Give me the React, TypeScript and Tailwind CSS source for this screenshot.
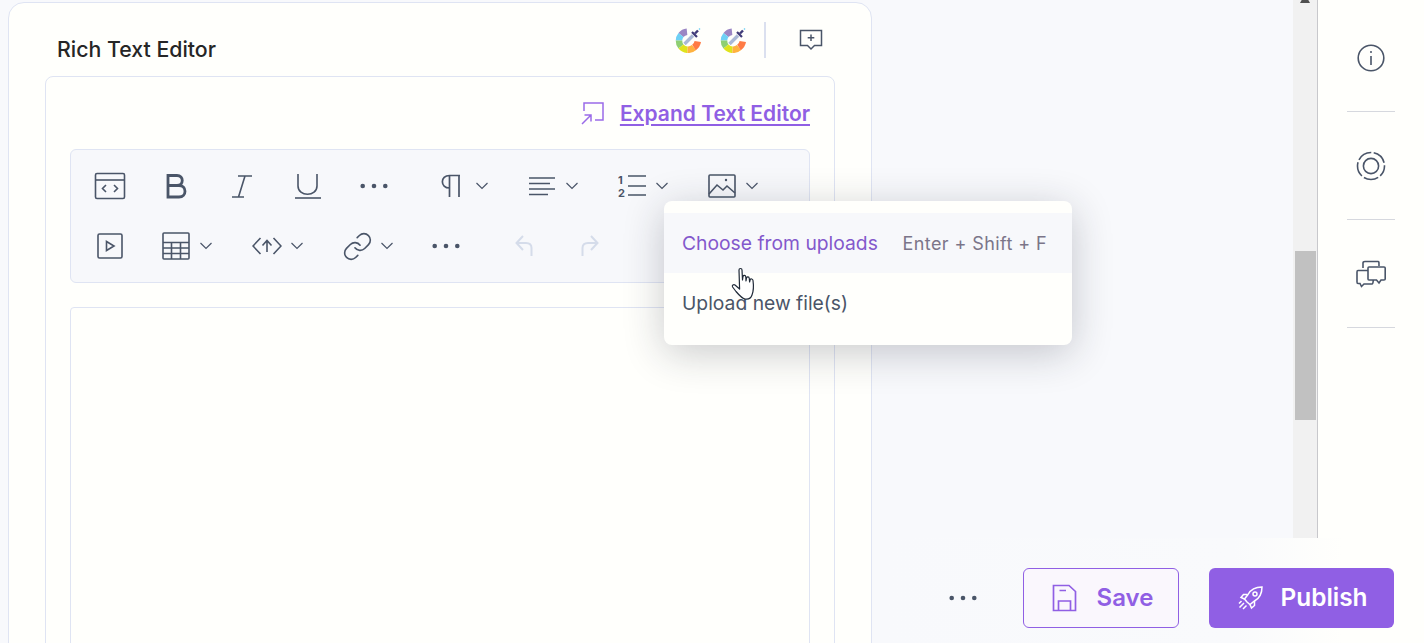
import { Link } from "lucide-react";
import type { ReactNode } from "react";

const ink = "#4a5568";

function Chevron() {
  return (
    <svg width="12" height="8" viewBox="0 0 12 8" fill="none" stroke={ink} strokeWidth="1.2">
      <path d="M0.5 1 L6 6.5 L11.5 1" />
    </svg>
  );
}

function Dots() {
  return (
    <svg width="28" height="6" viewBox="0 0 28 6" fill={ink}>
      <circle cx="2.7" cy="3" r="2.3" />
      <circle cx="14" cy="3" r="2.3" />
      <circle cx="25.3" cy="3" r="2.3" />
    </svg>
  );
}

function Cell({ children, wide, gap = "gap-[10px]", className = "" }: { children: ReactNode; wide?: boolean; gap?: string; className?: string }) {
  return (
    <button className={`flex h-[60px] items-center justify-center ${gap} ${wide ? "w-[90px]" : "w-[66px]"} ${className}`}>
      {children}
      {wide && <Chevron />}
    </button>
  );
}

function Stroke({ w, h, children, sw = 1.6, color = ink }: { w: number; h: number; children: ReactNode; sw?: number; color?: string }) {
  return (
    <svg width={w} height={h} viewBox={`0 0 ${w} ${h}`} fill="none" stroke={color} strokeWidth={sw} className="shrink-0">
      {children}
    </svg>
  );
}

function ColorWheel() {
  return (
    <svg width="26" height="26" viewBox="0 0 26 26" fill="none" className="shrink-0">
      <g strokeWidth="6.5">
        <path d="M12 4.800 A9 9 0 0 0 6 8" stroke="#9b86c4" />
        <path d="M6 8 A9 9 0 0 0 4 13.500" stroke="#6ed0f5" />
        <path d="M4 13.500 A9 9 0 0 0 6 19.500" stroke="#8fcf72" />
        <path d="M6 19.500 A9 9 0 0 0 12.500 22.800" stroke="#dfe31c" />
        <path d="M12.500 22.800 A9 9 0 0 0 19 20.500" stroke="#ffb23f" />
        <path d="M19 20.500 A9 9 0 0 0 22.800 14.500" stroke="#ff7b45" />
      </g>
      <path d="M9.500 17 L18 8.500" stroke="#aab8d6" strokeWidth="3.400" />
      <path d="M17 5 L22 10" stroke="#3f3a78" strokeWidth="2.200" />
      <path d="M20 6.500 L23 3.500" stroke="#3f3a78" strokeWidth="2.400" />
      <path d="M24 2.500 L25 1.500" stroke="#6ed0f5" strokeWidth="1.400" />
    </svg>
  );
}

function HandCursor() {
  return (
    <svg width="26" height="34" viewBox="0 0 26 34" className="absolute left-[731px] top-[267px]" fill="#fff" stroke="#1f2937" strokeWidth="1.2" strokeLinejoin="round">
      <path d="M8 3 C8 1 11 1 11 3 L11.5 13 L12 9.5 C12.5 8 14.5 8 14.8 10 L15 14 L15.5 11 C16 9.5 18 9.5 18.3 11.5 L18.6 15 L19.2 12.5 C19.8 11.5 21.8 11.8 22 13.5 C22.6 18 22.6 24 21 28 C20 31 17 32.5 14 32 C11 31.5 8 28 5 24.5 L1.6 20 C0.6 18.5 2.6 17 4 18 L8.6 22 Z" />
    </svg>
  );
}

export default function App() {
  return (
    <div className="relative flex h-[643px] w-full overflow-hidden bg-[#f8f9fc] font-['Inter',sans-serif]">
      <main className="flex-1 pl-2 pt-[2px]">
        <section className="h-[700px] w-[864px] rounded-t-[16px] border border-[#dfe4f3] bg-[#fffffc] px-9">
          <header className="flex h-[73px] items-center justify-between pr-[12px] pl-3">
            <h2 className="mt-[18px] text-[21.3px] font-medium leading-6 text-[#262626]">Rich Text Editor</h2>
            <div className="mb-[-1px] flex items-center">
              <ColorWheel />
              <span className="w-[19px]" />
              <ColorWheel />
              <span className="ml-[18px] h-9 w-[2px] bg-[#dbe0ef]" />
              <span className="ml-[33px]">
                <Stroke w={24} h={22} sw={1.5}>
                  <path d="M1.5 1.5 H22.5 V16.5 H15.5 L12 20 L8.5 16.5 H1.5 Z" />
                  <path d="M12 5.5 V12 M8.7 8.8 H15.3" />
                </Stroke>
              </span>
            </div>
          </header>

          <div className="h-[600px] rounded-t-[8px] border border-[#dfe4f3] px-6 pt-6">
            <div className="mb-6 flex h-6 items-center justify-end gap-[16px]">
              <Stroke w={23} h={23} sw={1.5} color="#9a6be8">
                <path d="M3 9 V1 H22 V18 H14" />
                <path d="M1 22 L10 13 M3.5 13 H10 V19.5" />
              </Stroke>
              <a className="pt-[1px] text-[21px] font-semibold leading-6 text-[#905fe4] underline decoration-2 underline-offset-[3px]">Expand Text Editor</a>
            </div>

            <div className="rounded-[6px] border border-[#dfe4f3] bg-[#f7f8fb] px-[6px] py-[6px]">
              <div className="flex">
                <Cell>
                  <Stroke w={32} h={28}>
                    <rect x="1.5" y="1.5" width="29" height="25" rx="1.5" />
                    <path d="M1.5 8 H30.5" />
                    <path d="M12 13 L8.5 16.5 L12 20 M20 13 L23.5 16.5 L20 20" />
                  </Stroke>
                </Cell>
                <Cell>
                  <Stroke w={22} h={26} sw={2.8}>
                    <path d="M3 2.5 H12 C19 2.5 19 12.5 12 12.5 H3 Z M3 12.5 H14 C22 12.5 22 24 14 24 H3 Z" />
                  </Stroke>
                </Cell>
                <Cell>
                  <Stroke w={22} h={24}>
                    <path d="M7 2 H21 M1 23 H13 M14 2 L7.5 23" />
                  </Stroke>
                </Cell>
                <Cell>
                  <Stroke w={28} h={26}>
                    <path d="M4 1 V13 C4 24 23 24 23 13 V1" />
                    <path d="M1 25 H27" />
                  </Stroke>
                </Cell>
                <Cell>
                  <Dots />
                </Cell>
                <span className="w-[11px]" />
                <Cell wide gap="gap-[15px]">
                  <Stroke w={22} h={24} sw={1.7}>
                    <path d="M10.500 1.500 C1 1.500 1 14 10.500 14 M10.500 1 V23 M20 1 V23 M10.500 1.500 H21" />
                  </Stroke>
                </Cell>
                <Cell wide>
                  <Stroke w={28} h={20}>
                    <path d="M1 2 H27 M1 7.5 H22 M1 13 H27 M1 18.5 H20" />
                  </Stroke>
                </Cell>
                <Cell wide>
                  <svg width="28" height="28" viewBox="0 0 28 28" fill="none" stroke={ink} strokeWidth="1.6" className="shrink-0">
                    <text x="0" y="12" fontSize="11" fontWeight="700" fill={ink} stroke="none" fontFamily="Inter">1</text>
                    <text x="0" y="25" fontSize="11" fontWeight="700" fill={ink} stroke="none" fontFamily="Inter">2</text>
                    <path d="M10 4 H28 M10 14 H28 M10 23 H28" />
                  </svg>
                </Cell>
                <Cell wide>
                  <Stroke w={28} h={24}>
                    <rect x="1" y="1" width="26" height="22" rx="1" />
                    <path d="M1 20 L9 11 L15 16 L19 12 L27 19" />
                    <circle cx="18" cy="6" r="1.2" fill={ink} stroke="none" />
                  </Stroke>
                </Cell>
              </div>
              <div className="flex">
                <Cell>
                  <Stroke w={26} h={26}>
                    <rect x="1" y="1" width="24" height="24" rx="1.5" />
                    <path d="M9.5 8.5 L17 13 L9.5 17.5 Z" />
                  </Stroke>
                </Cell>
                <Cell wide className="pr-[2px]">
                  <Stroke w={28} h={28}>
                    <rect x="1" y="1" width="26" height="26" rx="1" />
                    <path d="M1 10.5 H27 M1 16 H27 M1 21.5 H27 M9.5 10.5 V27 M18.5 10.5 V27" />
                  </Stroke>
                </Cell>
                <Cell wide gap="gap-[9px]" className="pr-[2px]">
                  <Stroke w={30} h={20}>
                    <path d="M8.500 2 L1 10 L8.500 18 M21.500 2 L29 10 L21.500 18" />
                    <path d="M15 16 V5 M10.5 9.5 L15 4.5 L19.5 9.5" />
                  </Stroke>
                </Cell>
                <Cell wide gap="gap-[8px]" className="pr-[2px]">
                  <Link size={31} strokeWidth={1.25} color={ink} className="shrink-0" />
                </Cell>
                <Cell>
                  <Dots />
                </Cell>
                <span className="w-3" />
                <Cell>
                  <Stroke w={18} h={22} sw={2} color="#d5dcea">
                    <path d="M8 1 L1.5 8 L8 15 M1.5 8 H11 C14.5 8 16.5 10 16.5 13 V21" />
                  </Stroke>
                </Cell>
                <Cell>
                  <Stroke w={18} h={22} sw={2} color="#d5dcea">
                    <path d="M10 1 L16.5 8 L10 15 M16.5 8 H7 C3.5 8 1.5 10 1.5 13 V21" />
                  </Stroke>
                </Cell>
              </div>
            </div>

            <div className="mt-6 h-[400px] rounded-t-[4px] border border-[#dfe4f3]" />
          </div>
        </section>
      </main>

      <div className="relative w-[24px] bg-[#f1f1f1]">
        <span className="absolute left-[7px] top-[-6px] border-x-[5px] border-b-[9px] border-x-transparent border-b-[#505050]" />
        <span className="absolute left-[2px] top-[251px] h-[169px] w-[21px] bg-[#c1c1c1]" />
      </div>

      <aside className="flex w-[107px] flex-col items-center border-l border-[#c8c8cc] bg-[#fffffc] pr-[1px]">
        {[
          <Stroke key="i" w={28} h={28}>
            <circle cx="14" cy="14" r="12.8" />
            <path d="M14 12 V21" />
            <circle cx="14" cy="8" r="1" fill={ink} stroke="none" />
          </Stroke>,
          <Stroke key="t" w={30} h={30} sw={1.6}>
            <circle cx="15" cy="15" r="13.5" strokeDasharray="15 2.5" strokeDashoffset="4" />
            <circle cx="15" cy="15" r="7.6" />
          </Stroke>,
          <Stroke key="c" w={30} h={28} sw={1.6}>
            <path d="M7 8 V3 C7 2 8 1.500 9 1.500 H22 C23 1.500 23 2 23 6" />
            <path d="M13 7 H28 C29 7 29.200 7.500 29.200 8 V19 C29.200 19.500 29 20 28 20 H25 L23 23 L20.500 20 H13 C12 20 12 19.500 12 19 V8 C12 7.500 12 7 13 7 Z" />
            <path d="M12 10.500 H2 C1 10.500 1 11 1 12 V22 C1 23 1 23.500 2 23.500 H4 L5.500 26.500 L8 24 H16 C17 24 17.200 23 17.200 20" />
          </Stroke>,
        ].map((icon) => (
          <div key={icon.key} className="flex h-[108px] w-12 shrink-0 items-center justify-center border-b border-[#d6d8de] first:h-[112px] first:pt-[4px]">
            {icon}
          </div>
        ))}
      </aside>

      <div className="absolute right-0 bottom-0 flex h-[105px] w-[544px] items-center justify-end gap-[30px] bg-[linear-gradient(to_right,#f8f9fc_0%,#f9fafc_65%,#fffffc_85%)] pr-[30px] pt-[14px]">
        <span className="mr-[16px]">
          <Dots />
        </span>
        <button className="flex h-[60px] w-[156px] items-center justify-center gap-[20px] rounded-[6px] border border-[#905fe4] bg-[#faf7fd] pl-[2px] text-[24px] font-semibold text-[#905fe4]">
          <Stroke w={26} h={28} sw={1.7} color="#905fe4">
            <path d="M2.500 1.500 H18 L24.500 7.500 V26.500 H2.500 Z" />
            <path d="M8.500 6.500 H15 M7.500 26.500 V17 H19.500 V26.500" />
          </Stroke>
          Save
        </button>
        <button className="flex h-[60px] w-[185px] items-center justify-center gap-[17px] rounded-[6px] bg-[#905fe4] pl-[2px] text-[24.4px] font-semibold text-white">
          <Stroke w={26} h={26} sw={1.5} color="#fff">
            <path d="M9 17 L6.500 14 L10 9.500 C13 4 18 2 24 2 C24 8 22 13 16.500 16 L12 19.500 Z" />
            <path d="M9.500 9.500 H5.500 L3 12.500 L6.500 14 M16.500 16 V20.500 L13.500 23 L12 19.500" />
            <circle cx="17" cy="9" r="2" />
            <path d="M6 18 L1.500 22.500 M8.500 20.500 L5 24 M3.500 16 L1 18.500" />
          </Stroke>
          Publish
        </button>
      </div>

      <div className="absolute left-[664px] top-[201px] h-[144px] w-[408px] rounded-[8px] bg-[#fffffc] pt-3 shadow-[0_8px_40px_rgba(30,35,50,0.24)]">
        <div className="flex h-[60px] items-center justify-between bg-[#f7f8fb] pl-[18px] pr-[25px]">
          <span className="text-[19.3px] leading-6 text-[#8358cc]">Choose from uploads</span>
          <span className="pt-[1px] text-[18px] leading-6 tracking-[0.4px] text-[#7b7589]">Enter + Shift + F</span>
        </div>
        <div className="flex h-[60px] items-center pl-[18px]">
          <span className="text-[19.3px] leading-6 text-[#4a5568]">Upload new file(s)</span>
        </div>
      </div>

      <HandCursor />
    </div>
  );
}
